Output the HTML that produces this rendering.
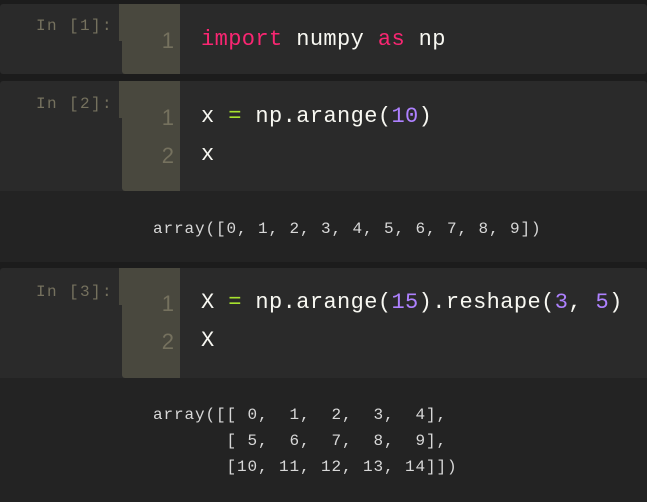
<!DOCTYPE html><html><head><style>
body{margin:0;width:647px;height:502px;background:#1c1c1c;overflow:hidden;position:relative;font-family:"Liberation Mono",monospace}
.cell{position:absolute;left:0;width:647px;background:#2a2a2a;border-radius:3px}
.out{position:absolute;left:0;width:647px;background:#232323}
.gut{position:absolute;left:122px;width:58px;background:#49483e;border-radius:0 0 0 3px}
.notch{position:absolute;left:119px;width:3px;height:37px;background:#49483e}
.pr{position:absolute;left:36px;font-size:16px;letter-spacing:1.4px;color:#75715e}
.ln{position:absolute;left:122px;width:52px;text-align:right;font-size:22px;color:#75715e;font-family:"Liberation Sans",sans-serif;}
.code{position:absolute;left:201px;font-size:22px;letter-spacing:0.4px;color:#f8f8f2;white-space:pre}
.o{position:absolute;left:153px;font-size:16px;letter-spacing:0.9px;color:#d8d8d8;white-space:pre;line-height:26px}
.k{color:#f92672}.n{color:#ae81ff}.e{color:#a6e22e}
</style></head><body>
<div class="cell" style="top:4px;height:70px"></div>
<div class="notch" style="top:4px"></div><div class="gut" style="top:4px;height:70px"></div>
<div class="pr" style="top:17px">In [1]:</div>
<div class="ln" style="top:28px">1</div>
<div class="code" style="top:27px"><span class="k">import</span> numpy <span class="k">as</span> np</div>

<div class="cell" style="top:81px;height:110px;border-radius:3px 3px 0 0"></div>
<div class="notch" style="top:81px"></div><div class="gut" style="top:81px;height:110px"></div>
<div class="pr" style="top:95px">In [2]:</div>
<div class="ln" style="top:105px">1</div><div class="ln" style="top:143px">2</div>
<div class="code" style="top:104px">x <span class="e">=</span> np.arange(<span class="n">10</span>)</div>
<div class="code" style="top:142px">x</div>
<div class="out" style="top:191px;height:71px"></div>
<div class="o" style="top:216px">array([0, 1, 2, 3, 4, 5, 6, 7, 8, 9])</div>

<div class="cell" style="top:268px;height:110px;border-radius:3px 3px 0 0"></div>
<div class="notch" style="top:268px"></div><div class="gut" style="top:268px;height:110px"></div>
<div class="pr" style="top:283px">In [3]:</div>
<div class="ln" style="top:291px">1</div><div class="ln" style="top:329px">2</div>
<div class="code" style="top:290px">X <span class="e">=</span> np.arange(<span class="n">15</span>).reshape(<span class="n">3</span>, <span class="n">5</span>)</div>
<div class="code" style="top:328px">X</div>
<div class="out" style="top:378px;height:124px"></div>
<div class="o" style="top:402px">array([[ 0,  1,  2,  3,  4],
       [ 5,  6,  7,  8,  9],
       [10, 11, 12, 13, 14]])</div>
</body></html>
